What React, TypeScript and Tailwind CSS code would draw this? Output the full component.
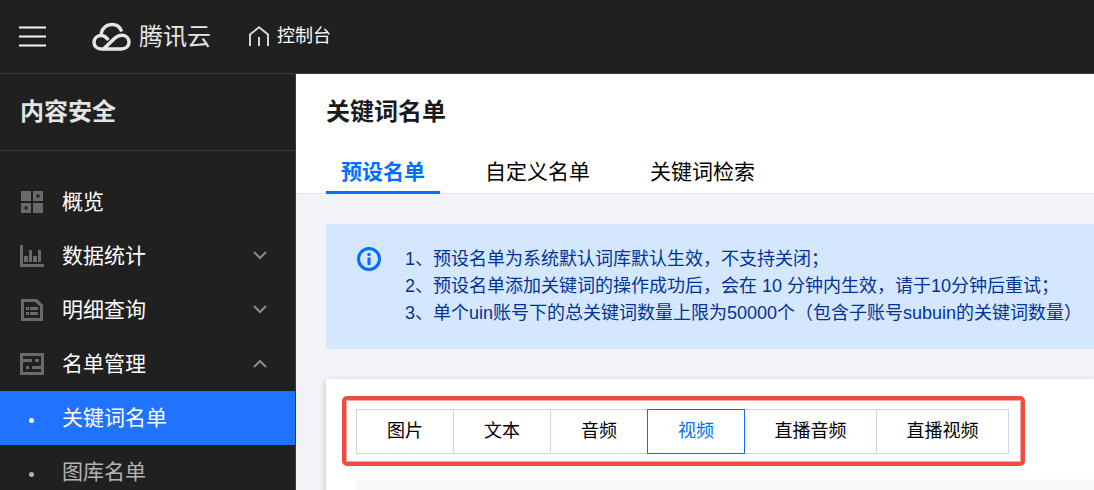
import React, { useState } from 'react';

const navItems = [
  { label: '概览', icon: 'overview', arrow: '' },
  { label: '数据统计', icon: 'stats', arrow: 'down' },
  { label: '明细查询', icon: 'detail', arrow: 'down' },
  { label: '名单管理', icon: 'list', arrow: 'up' },
];

const subItems = ['关键词名单', '图库名单'];

const tabs = ['预设名单', '自定义名单', '关键词检索'];

const types = ['图片', '文本', '音频', '视频', '直播音频', '直播视频'];

const notices = [
  '1、预设名单为系统默认词库默认生效，不支持关闭；',
  '2、预设名单添加关键词的操作成功后，会在 10 分钟内生效，请于10分钟后重试；',
  '3、单个uin账号下的总关键词数量上限为50000个（包含子账号subuin的关键词数量）',
];

function NavIcon({ name }: { name: string }) {
  switch (name) {
    case 'overview':
      return (
        <svg width="24" height="24" viewBox="0 0 24 24" fill="#6a6a6a" fillRule="evenodd" aria-hidden="true">
          <path d="M1 1h10v10H1zM13 1h10v10H13zM16.500 4.500v3h3v-3zM1 13h10v10H1zM4.500 16.500v3h3v-3zM13 13h10v10H13z" />
        </svg>
      );
    case 'stats':
      return (
        <svg width="24" height="24" viewBox="0 0 24 24" fill="#6a6a6a" aria-hidden="true">
          <path d="M0 1h3v19h21v3H0zM4 12h4v6H4zM9 6h3v12H9zM13 12h4v6h-4zM18 6h3v12h-3z" />
        </svg>
      );
    case 'detail':
      return (
        <svg width="24" height="24" viewBox="0 0 24 24" fill="#6a6a6a" fillRule="evenodd" aria-hidden="true">
          <path d="M1 1h16l6 6v16H1zM4 4v16h16V8.500L15.500 4z" />
          <path d="M6 9h3v3H6zM10 9h8v3h-8zM6 14h3v3H6zM10 14h8v3h-8z" />
        </svg>
      );
    default:
      return (
        <svg width="24" height="24" viewBox="0 0 24 24" fill="#6a6a6a" fillRule="evenodd" aria-hidden="true">
          <path d="M0 1h24v22H0zM3 4v16h18V4z" />
          <path d="M3 7h9v3H3zM15 7h4v3h-4zM6 14h3v3H6zM12 14h9v3h-9z" />
        </svg>
      );
  }
}

function Arrow({ dir }: { dir: string }) {
  return (
    <svg width="14" height="10" viewBox="0 0 14 10" fill="none" stroke="#8c8c8c" strokeWidth="2" aria-hidden="true">
      <path d={dir === 'up' ? 'M1 8l6-6 6 6' : 'M1 1l6 6 6-6'} />
    </svg>
  );
}

function Header() {
  return (
    <header className="flex h-[74px] shrink-0 items-center border-b border-[#3b3b3b] bg-[#202020] pl-[19px] text-[#e5e5e5]">
      <button type="button" aria-label="菜单" className="cursor-pointer">
        <svg width="27" height="22" viewBox="0 0 27 22">
          <path d="M0 0h27v3H0zM0 9h27v3H0zM0 18h27v3H0z" fill="#8c8c8c" />
          <path d="M0 1h27v1H0zM0 10h27v1H0zM0 19h27v1H0z" fill="#f2f2f2" />
        </svg>
      </button>
      <a href="#home" className="ml-[46px] flex items-center gap-2 text-[24px] leading-[36px]">
        <svg width="39" height="30" viewBox="0 0 39 30" fill="none" stroke="#e5e5e5" strokeWidth="3.500" aria-hidden="true">
          <path d="M9 12C10.500 5.500 14.500 2.500 20 2.500c5 0 8.200 2.700 9.700 7" />
          <path d="M16.500 18C14 15 12 13.500 9.500 13.500 5 13.500 2 16.500 2 20.300S5 27 9.500 27H29c5 0 8-3 8-6.800 0-4-3-7-7.500-7-2.800 0-4.800 1.200-7 3.300L12 26.500" />
        </svg>
        腾讯云
      </a>
      <a href="#console" className="ml-[38px] flex items-center gap-2 text-[18px] leading-[27px] text-white">
        <svg width="20" height="22" viewBox="0 0 20 22" fill="none" stroke="#d5d5d5" strokeWidth="2" aria-hidden="true">
          <path d="M1 20V8.500L10 1.300l9 7.200V20M10 11v9" />
        </svg>
        控制台
      </a>
    </header>
  );
}

function Sidebar() {
  return (
    <aside className="w-[296px] shrink-0 border-r border-[#3b3b3b] bg-[#202020] text-[21px] text-[#e5e5e5]">
      <h2 className="flex h-[77px] items-center border-b border-[#3b3b3b] px-5 text-[24px] font-bold">内容安全</h2>
      <nav className="pt-6">
        {navItems.map((item) => (
          <a key={item.label} href="#nav" className="flex h-[54px] items-center pr-7 pl-5 text-white">
            <NavIcon name={item.icon} />
            <span className="ml-[18px] flex-1">{item.label}</span>
            {item.arrow && <Arrow dir={item.arrow} />}
          </a>
        ))}
        {subItems.map((label, i) => (
          <a
            key={label}
            href="#sub"
            className={`flex h-[54px] items-center pl-[29px] ${i === 0 ? 'bg-[#2173ff] text-white' : 'text-[#b3b3b3]'}`}
          >
            <span className="mt-1 mr-[28px] size-[5px] rounded-full bg-current" />
            {label}
          </a>
        ))}
      </nav>
    </aside>
  );
}

export default function App() {
  const [tab, setTab] = useState('预设名单');
  const [type, setType] = useState('视频');

  return (
    <div
      lang="zh-CN"
      className="flex h-screen flex-col overflow-hidden bg-[#f2f3f7] font-['Liberation_Sans','Noto_Sans_CJK_SC',sans-serif] text-black"
    >
      <Header />
      <div className="flex min-h-0 flex-1">
        <Sidebar />
        <main className="min-w-0 flex-1 overflow-hidden">
          <div className="border-b border-[#e5e8ed] bg-white pt-5 pl-[30px]">
            <h1 className="text-[24px] leading-[36px] font-bold text-[#1a1a1a]">关键词名单</h1>
            <div className="mt-[22px] -mb-px flex gap-[30px]">
              {tabs.map((t) => (
                <button
                  key={t}
                  type="button"
                  onClick={() => setTab(t)}
                  className={`h-[42px] cursor-pointer border-b-[3px] px-[15px] text-[21px] ${
                    t === tab ? 'border-[#006eff] font-bold text-[#006eff]' : 'border-transparent'
                  }`}
                >
                  {t}
                </button>
              ))}
            </div>
          </div>

          <div className="space-y-[30px] pt-[30px] pl-[30px]">
            <div className="flex gap-6 bg-[#d5e7ff] py-[22px] pl-[31px] text-[18px] leading-[27px] text-[#003399]">
              <svg width="24" height="24" viewBox="0 0 24 24" className="mt-px shrink-0" aria-hidden="true">
                <circle cx="12" cy="12" r="10.500" fill="none" stroke="#006eff" strokeWidth="3" />
                <path d="M10.500 6h3v3h-3zM10.500 10.500h3V18h-3z" fill="#006eff" />
              </svg>
              <div className="whitespace-nowrap">
                {notices.map((n) => (
                  <p key={n}>{n}</p>
                ))}
              </div>
            </div>

            <div className="h-[300px] bg-white pt-[30px] pl-[30px] shadow-[0_2px_6px_rgba(54,58,80,0.3)]">
              <div className="relative flex w-fit">
                {types.map((t) => (
                  <button
                    key={t}
                    type="button"
                    onClick={() => setType(t)}
                    className={`-mr-px h-[45px] cursor-pointer border text-[18px] ${t.length > 2 ? 'w-[133px]' : 'w-[98px]'} ${
                      t === type ? 'z-10 border-[#006eff] text-[#006eff]' : 'border-[#cfd5de]'
                    }`}
                  >
                    {t}
                  </button>
                ))}
                <div className="pointer-events-none absolute -top-[13px] -right-[17px] -bottom-3 -left-[14px] rounded-[5px] border-4 border-[#f04b3f] ring-1 ring-[#f04b3f]/50 ring-inset" />
              </div>
              <div className="mt-[25px] h-[60px] bg-[#f9f9fb]" />
            </div>
          </div>
        </main>
      </div>
    </div>
  );
}
